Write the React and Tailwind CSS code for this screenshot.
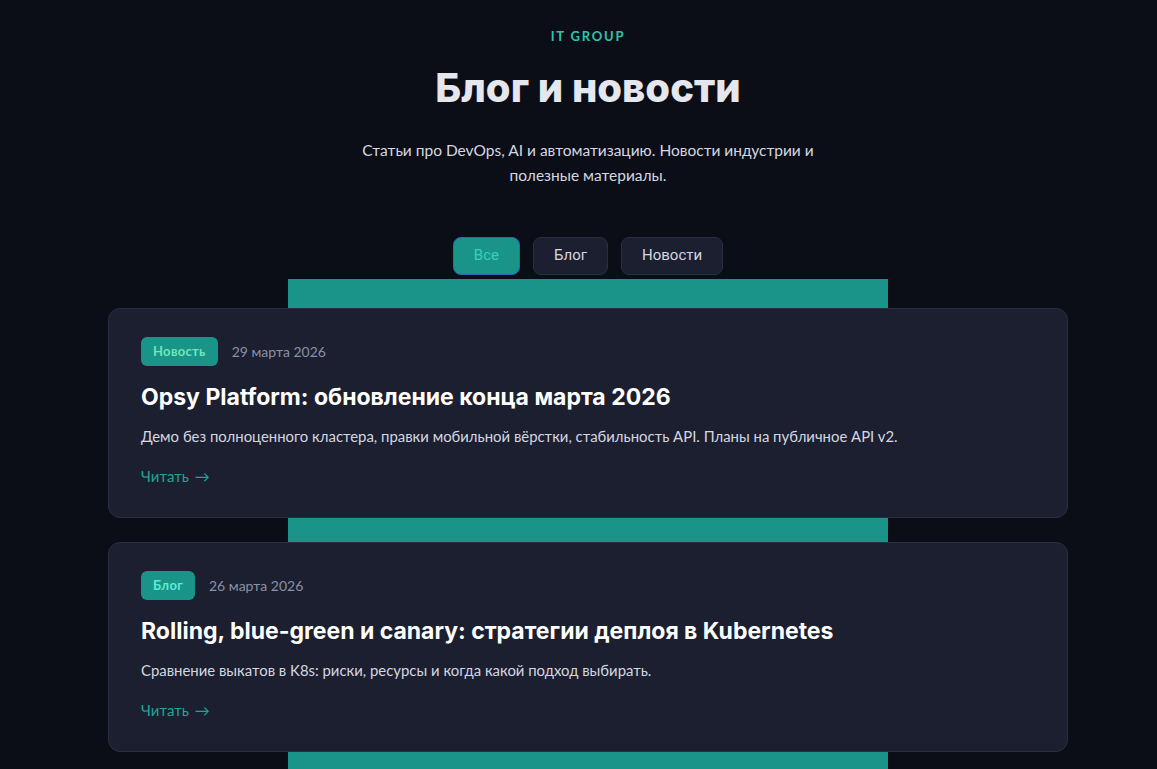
import { useState } from 'react';

const posts = [
  {
    tag: 'Новость',
    tagColor: 'text-[#6ee7b7]',
    date: '29 марта 2026',
    title: 'Opsy Platform: обновление конца марта 2026',
    excerpt: 'Демо без полноценного кластера, правки мобильной вёрстки, стабильность API. Планы на публичное API v2.',
  },
  {
    tag: 'Блог',
    tagColor: 'text-[#5eead4]',
    date: '26 марта 2026',
    title: 'Rolling, blue-green и canary: стратегии деплоя в Kubernetes',
    excerpt: 'Сравнение выкатов в K8s: риски, ресурсы и когда какой подход выбирать.',
  },
];

const filters = ['Все', 'Блог', 'Новости'];

function PostCard({ post }) {
  return (
    <article className="rounded-xl border border-[#2b2e40] bg-[#1c1f2f] px-8 pt-7 pb-[29px]">
      <div className="flex items-center gap-[14px]">
        <span className={`rounded-md bg-[#1a9488] px-3 py-[6px] text-[13px] font-bold leading-[17px] tracking-[0.3px] ${post.tagColor}`}>
          {post.tag}
        </span>
        <span className="text-[14px] text-[#8a91a8]">{post.date}</span>
      </div>
      <h2 className="mt-[16px] text-[23px] font-bold leading-[30px] text-white font-['Inter',sans-serif]">
        {post.title}
      </h2>
      <p className="mt-[13px] text-[14.9px] leading-[22px] text-[#d4d7e0]">{post.excerpt}</p>
      <a href="#" className="mt-[18px] inline-block text-[15px] leading-[22px] text-[#1fa596]">
        Читать <span className="ml-[2px]">→</span>
      </a>
    </article>
  );
}

export default function App() {
  const [active, setActive] = useState('Все');

  return (
    <div className="min-h-screen bg-[#0c0e17] font-['Lato',sans-serif] pl-[19px]">
      <header className="flex flex-col items-center pt-[27px] text-center">
        <div className="text-[13px] font-bold tracking-[1.8px] text-[#2ec4b0]">IT GROUP</div>
        <h1 className="mt-[17px] text-[40px] font-extrabold leading-[48px] text-[#e5e7ee] font-['Inter',sans-serif]">
          Блог и новости
        </h1>
        <p className="mt-[26px] w-[490px] text-[15.5px] leading-[25px] text-[#d4d7e0]">
          Статьи про DevOps, AI и автоматизацию. Новости индустрии и полезные материалы.
        </p>
      </header>

      <nav className="mt-[49px] flex justify-center gap-[13px] font-['Roboto',sans-serif]">
        {filters.map((f) =>
          f === active ? (
            <button
              key={f}
              onClick={() => setActive(f)}
              className="h-[38px] rounded-lg border border-[#3563b8] bg-[#1a9488] px-5 text-[15px] text-[#34d3bd]"
            >
              {f}
            </button>
          ) : (
            <button
              key={f}
              onClick={() => setActive(f)}
              className="h-[38px] rounded-lg border border-[#2b2e40] bg-[#1c1f2f] px-5 text-[15px] text-[#d4d7e0]"
            >
              {f}
            </button>
          )
        )}
      </nav>

      <section className="mx-auto mt-[4px] w-[600px] bg-[#1a9488] pt-[29px] pb-[20px]">
        <div className="-mx-[180px] flex flex-col gap-[24px]">
          {posts.map((p) => (
            <PostCard key={p.title} post={p} />
          ))}
        </div>
      </section>
    </div>
  );
}
